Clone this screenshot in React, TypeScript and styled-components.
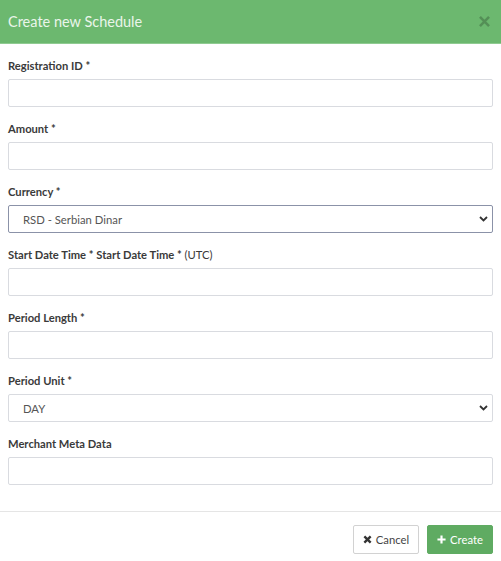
import React, { useState } from 'react'
import styled, { createGlobalStyle } from 'styled-components'

const GlobalStyle = createGlobalStyle`
  html, body {
    margin: 0;
    padding: 0;
    background: #ffffff;
  }
  body {
    font-family: 'Lato', 'Open Sans', sans-serif;
    color: #333333;
  }
  * {
    box-sizing: border-box;
  }
`

const Modal = styled.div`
  background: #ffffff;
  display: flex;
  flex-direction: column;
  width: 501px;
`

const Header = styled.div`
  align-items: center;
  background: #6cb86f;
  border-bottom: 1px solid #8fcb91;
  display: flex;
  height: 44px;
  justify-content: space-between;
  padding: 0 8px;
`

const Title = styled.h4`
  color: #eaf5ea;
  font-size: 14.5px;
  font-weight: 400;
  margin: 0;
`

const CloseButton = styled.button`
  background: none;
  border: 0;
  color: rgba(0, 0, 0, 0.2);
  cursor: pointer;
  display: flex;
  padding: 0 2px;
`

const Body = styled.div`
  display: flex;
  flex-direction: column;
  padding: 13px 8px 13px;
`

const FormGroup = styled.div`
  display: flex;
  flex-direction: column;
  margin-bottom: 13px;
`

const Label = styled.label`
  color: #3a3a3a;
  font-size: 11.2px;
  font-weight: 700;
  line-height: 17px;
  margin-bottom: 5px;
`

const Hint = styled.span`
  font-weight: 400;
`

const Input = styled.input`
  background: #ffffff;
  border: 1px solid #d9dbe0;
  border-radius: 2px;
  font-family: inherit;
  font-size: 12px;
  height: 28px;
  outline: none;
  padding: 0 12px;
  width: 100%;
`

const SelectWrap = styled.div`
  position: relative;
`

const Select = styled.select<{ $focused?: boolean }>`
  appearance: none;
  background: #ffffff;
  border: 1px solid ${p => (p.$focused ? '#8b92a8' : '#d9dbe0')};
  border-radius: 2px;
  color: #555555;
  font-family: inherit;
  font-size: 11.3px;
  height: 28px;
  outline: none;
  padding: 0 14px;
  width: 100%;
`

const Chevron = styled.svg`
  pointer-events: none;
  position: absolute;
  right: 5px;
  top: 11px;
`

const Footer = styled.div`
  border-top: 1px solid #e5e5e5;
  display: flex;
  gap: 8px;
  justify-content: flex-end;
  padding: 13px 8px 8px;
`

const Button = styled.button<{ $primary?: boolean }>`
  align-items: center;
  background: ${p => (p.$primary ? '#5fab62' : '#ffffff')};
  border: 1px solid ${p => (p.$primary ? '#5fab62' : '#d2d2d2')};
  border-radius: 2px;
  color: ${p => (p.$primary ? '#ffffff' : '#444444')};
  cursor: pointer;
  display: flex;
  font-family: inherit;
  font-size: 11.3px;
  gap: 4px;
  height: 29px;
  justify-content: center;
  padding: 0;
  width: 66px;
`

const ChevronIcon = () => (
  <Chevron width="9" height="6" viewBox="0 0 9 6">
    <path d="M1 1 L4.5 4.5 L8 1" fill="none" stroke="#333" strokeWidth="1.8" />
  </Chevron>
)

const TimesIcon = ({ size, color, weight }: { size: number; color: string; weight: number }) => (
  <svg width={size} height={size} viewBox="0 0 10 10">
    <path d="M1.5 1.5 L8.5 8.5 M8.5 1.5 L1.5 8.5" stroke={color} strokeWidth={weight} strokeLinecap="butt" />
  </svg>
)

const PlusIcon = () => (
  <svg width="9" height="9" viewBox="0 0 10 10">
    <path d="M5 0.5 V9.5 M0.5 5 H9.5" stroke="#ffffff" strokeWidth="2.4" />
  </svg>
)

const fields = [
  { id: 'registrationId', label: 'Registration ID *' },
  { id: 'amount', label: 'Amount *' },
]

export default function App() {
  const [currency, setCurrency] = useState('RSD')
  const [unit, setUnit] = useState('DAY')

  return (
    <>
      <GlobalStyle />
      <Modal>
        <Header>
          <Title>Create new Schedule</Title>
          <CloseButton aria-label="Close">
            <TimesIcon size={13} color="rgba(0,0,0,0.22)" weight={2} />
          </CloseButton>
        </Header>
        <Body>
          {fields.map(f => (
            <FormGroup key={f.id}>
              <Label htmlFor={f.id}>{f.label}</Label>
              <Input id={f.id} />
            </FormGroup>
          ))}
          <FormGroup>
            <Label htmlFor="currency">Currency *</Label>
            <SelectWrap>
              <Select id="currency" $focused value={currency} onChange={e => setCurrency(e.target.value)}>
                <option value="RSD">RSD - Serbian Dinar</option>
                <option value="EUR">EUR - Euro</option>
                <option value="USD">USD - US Dollar</option>
              </Select>
              <ChevronIcon />
            </SelectWrap>
          </FormGroup>
          <FormGroup>
            <Label htmlFor="startDate">
              Start Date Time * Start Date Time * <Hint>(UTC)</Hint>
            </Label>
            <Input id="startDate" />
          </FormGroup>
          <FormGroup>
            <Label htmlFor="periodLength">Period Length *</Label>
            <Input id="periodLength" />
          </FormGroup>
          <FormGroup>
            <Label htmlFor="periodUnit">Period Unit *</Label>
            <SelectWrap>
              <Select id="periodUnit" value={unit} onChange={e => setUnit(e.target.value)}>
                <option value="DAY">DAY</option>
                <option value="WEEK">WEEK</option>
                <option value="MONTH">MONTH</option>
              </Select>
              <ChevronIcon />
            </SelectWrap>
          </FormGroup>
          <FormGroup>
            <Label htmlFor="meta">Merchant Meta Data</Label>
            <Input id="meta" />
          </FormGroup>
        </Body>
        <Footer>
          <Button>
            <TimesIcon size={9} color="#333" weight={2.6} />
            Cancel
          </Button>
          <Button $primary>
            <PlusIcon />
            Create
          </Button>
        </Footer>
      </Modal>
    </>
  )
}
